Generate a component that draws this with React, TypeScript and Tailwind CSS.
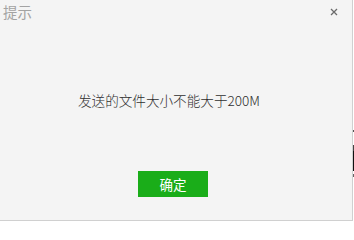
import React from "react";

const FONT = '"Noto Sans CJK SC", "Liberation Sans", sans-serif';

export default function App() {
  return (
    <div className="flex h-[221px] w-[354px] bg-white" style={{ fontFamily: FONT }}>
      {/* dialog */}
      <div className="flex h-[221px] w-[353px] flex-col border-r border-b border-[#d0d0d0] bg-[#f4f4f4]">
        <div className="flex h-[24px] items-start justify-between pl-[3px] pr-[14px] pt-[2px]">
          <span className="text-[14.5px] leading-[20px] text-[#a3a3a3]">提示</span>
          <svg width="8" height="8" viewBox="0 0 8 8" className="mt-[6px]">
            <path d="M1 1L7 7M7 1L1 7" stroke="#6b6b6b" strokeWidth="1.3" />
          </svg>
        </div>
        <div className="flex flex-1 flex-col items-center pr-[6px]">
          <p className="mt-[66px] mr-[8px] text-[13.6px] font-light leading-[20px] text-[#2e2e2e]">发送的文件大小不能大于200M</p>
          <button
            type="button"
            className="mt-[61px] h-[26px] w-[70px] bg-[#1aad19] text-[13.5px] leading-[26px] text-white"
          >
            确定
          </button>
        </div>
      </div>
      {/* sliver of the window behind */}
      <div className="flex flex-1 flex-col">
        <div className="h-[130px]" />
        <div className="h-[2px] bg-[#555]" />
        <div className="h-[13px]" />
        <div className="h-[6px] bg-[#444]" />
        <div className="h-[20px] bg-[#111]" />
        <div className="h-[3px]" />
        <div className="h-[3px] bg-[#666]" />
      </div>
    </div>
  );
}
